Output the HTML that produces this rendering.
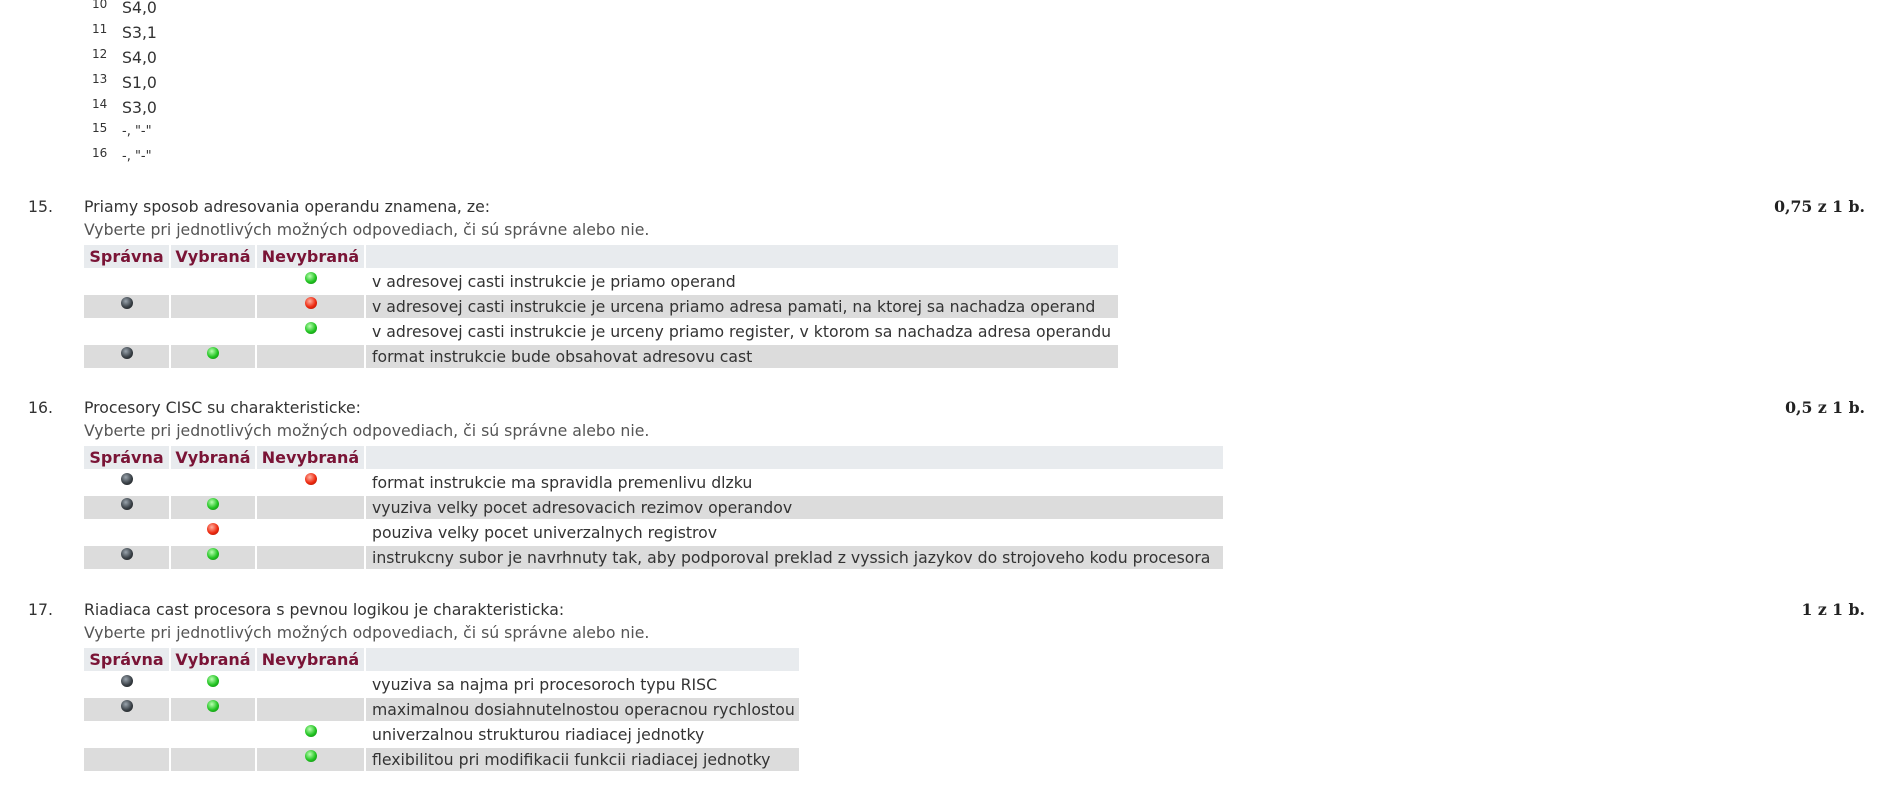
<!DOCTYPE html>
<html><head><meta charset="utf-8"><style>
body{margin:0;width:1878px;height:789px;overflow:hidden;background:#fff;font-family:"DejaVu Sans","Liberation Sans",sans-serif;color:#333;font-size:15.7px;position:relative}
.l{position:absolute;left:92px;height:24px;line-height:24px;white-space:nowrap}
.l sup{font-size:12px;display:inline-block;width:30px;vertical-align:top;line-height:16px}
.q{position:absolute;left:0;width:1878px}
.num{position:absolute;left:28px;top:0}
.tt{position:absolute;left:84px;top:0;white-space:nowrap}
.sub{position:absolute;left:84px;top:23px;color:#555;white-space:nowrap}
.sc{position:absolute;right:13px;top:0;font-weight:bold;font-family:"DejaVu Serif","Liberation Serif",serif;color:#222}
table{position:absolute;left:82px;top:46px;border-collapse:separate;border-spacing:2px;table-layout:fixed}
td,th{height:23px;padding:0;white-space:nowrap;overflow:visible}
th{background:#e8ebee;color:#7a1436;font-weight:bold;font-size:16px;text-align:center;padding:0;line-height:23px}
td{text-align:center}
td.t{text-align:left;padding:0 6px;line-height:23px}
tr.g td{background:#dcdcdc}
.c1{width:85px}.c2{width:84px}.c3{width:107px}
.d{display:inline-block;width:12px;height:12px;border-radius:50%;position:relative;top:-3px}
.k{background:radial-gradient(circle at 40% 35%,#9aa4ad,#3b4248 55%,#111 100%)}
.gr{background:radial-gradient(circle at 40% 35%,#b8ffb0,#22c422 55%,#0a7a0a 100%)}
.r{background:radial-gradient(circle at 40% 35%,#ffb0a0,#ee2a10 55%,#9a1000 100%)}
</style></head><body>
<div class="l" style="top:-4px"><sup>10</sup>S4,0</div>
<div class="l" style="top:21px"><sup>11</sup>S3,1</div>
<div class="l" style="top:46px"><sup>12</sup>S4,0</div>
<div class="l" style="top:71px"><sup>13</sup>S1,0</div>
<div class="l" style="top:96px"><sup>14</sup>S3,0</div>
<div class="l" style="top:120px;font-size:13px"><sup>15</sup>-, "-"</div>
<div class="l" style="top:145px;font-size:13px"><sup>16</sup>-, "-"</div>

<div class="q" style="top:197px">
<div class="num">15.</div><div class="tt">Priamy sposob adresovania operandu znamena, ze:</div>
<div class="sub">Vyberte pri jednotlivých možných odpovediach, či sú správne alebo nie.</div>
<div class="sc">0,75 z 1 b.</div>
<table style="width:1038px"><tr><th class="c1">Správna</th><th class="c2">Vybraná</th><th class="c3">Nevybraná</th><th></th></tr>
<tr><td></td><td></td><td><span class="d gr"></span></td><td class="t">v adresovej casti instrukcie je priamo operand</td></tr>
<tr class="g"><td><span class="d k"></span></td><td></td><td><span class="d r"></span></td><td class="t">v adresovej casti instrukcie je urcena priamo adresa pamati, na ktorej sa nachadza operand</td></tr>
<tr><td></td><td></td><td><span class="d gr"></span></td><td class="t">v adresovej casti instrukcie je urceny priamo register, v ktorom sa nachadza adresa operandu</td></tr>
<tr class="g"><td><span class="d k"></span></td><td><span class="d gr"></span></td><td></td><td class="t">format instrukcie bude obsahovat adresovu cast</td></tr>
</table></div>

<div class="q" style="top:398px">
<div class="num">16.</div><div class="tt">Procesory CISC su charakteristicke:</div>
<div class="sub">Vyberte pri jednotlivých možných odpovediach, či sú správne alebo nie.</div>
<div class="sc">0,5 z 1 b.</div>
<table style="width:1143px"><tr><th class="c1">Správna</th><th class="c2">Vybraná</th><th class="c3">Nevybraná</th><th></th></tr>
<tr><td><span class="d k"></span></td><td></td><td><span class="d r"></span></td><td class="t">format instrukcie ma spravidla premenlivu dlzku</td></tr>
<tr class="g"><td><span class="d k"></span></td><td><span class="d gr"></span></td><td></td><td class="t">vyuziva velky pocet adresovacich rezimov operandov</td></tr>
<tr><td></td><td><span class="d r"></span></td><td></td><td class="t">pouziva velky pocet univerzalnych registrov</td></tr>
<tr class="g"><td><span class="d k"></span></td><td><span class="d gr"></span></td><td></td><td class="t">instrukcny subor je navrhnuty tak, aby podporoval preklad z vyssich jazykov do strojoveho kodu procesora</td></tr>
</table></div>

<div class="q" style="top:600px">
<div class="num">17.</div><div class="tt">Riadiaca cast procesora s pevnou logikou je charakteristicka:</div>
<div class="sub">Vyberte pri jednotlivých možných odpovediach, či sú správne alebo nie.</div>
<div class="sc">1 z 1 b.</div>
<table style="width:719px"><tr><th class="c1">Správna</th><th class="c2">Vybraná</th><th class="c3">Nevybraná</th><th></th></tr>
<tr><td><span class="d k"></span></td><td><span class="d gr"></span></td><td></td><td class="t">vyuziva sa najma pri procesoroch typu RISC</td></tr>
<tr class="g"><td><span class="d k"></span></td><td><span class="d gr"></span></td><td></td><td class="t">maximalnou dosiahnutelnostou operacnou rychlostou</td></tr>
<tr><td></td><td></td><td><span class="d gr"></span></td><td class="t">univerzalnou strukturou riadiacej jednotky</td></tr>
<tr class="g"><td></td><td></td><td><span class="d gr"></span></td><td class="t">flexibilitou pri modifikacii funkcii riadiacej jednotky</td></tr>
</table></div>
</body></html>
